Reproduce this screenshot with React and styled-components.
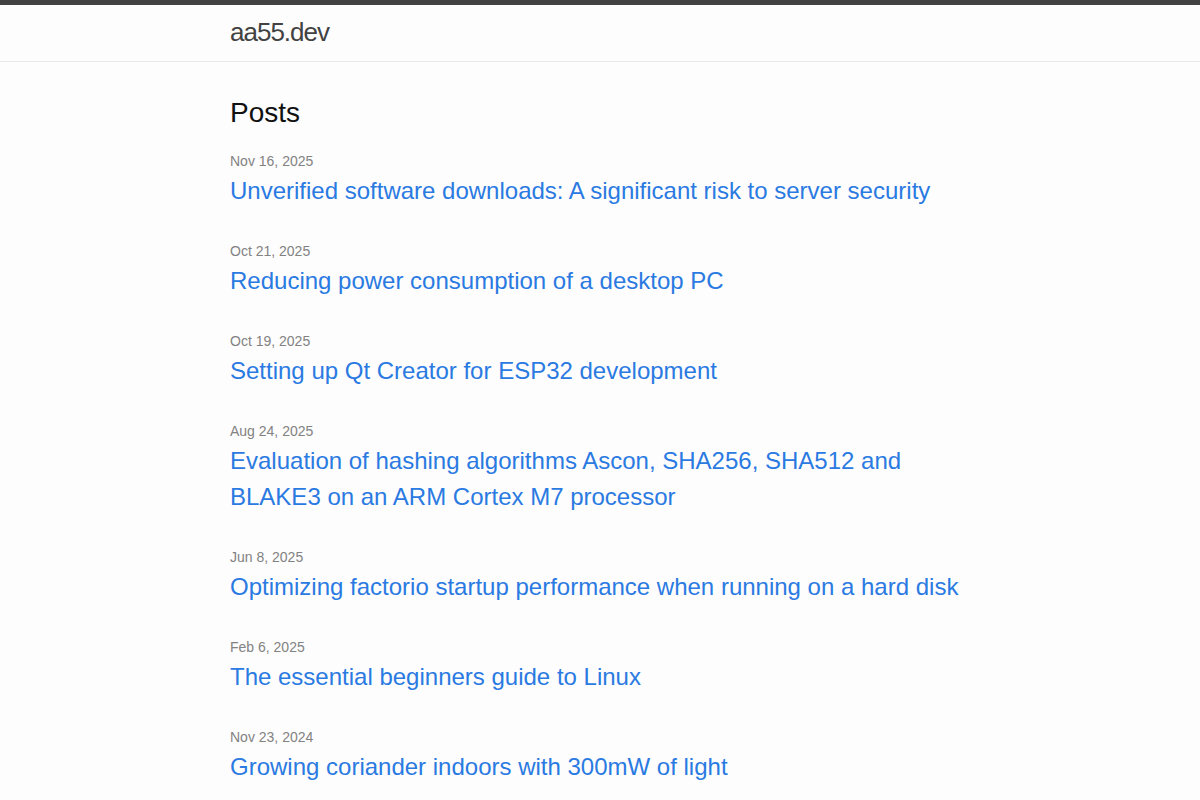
import React from "react";
import styled, { createGlobalStyle } from "styled-components";

const posts = [
  { date: "Nov 16, 2025", title: "Unverified software downloads: A significant risk to server security" },
  { date: "Oct 21, 2025", title: "Reducing power consumption of a desktop PC" },
  { date: "Oct 19, 2025", title: "Setting up Qt Creator for ESP32 development" },
  { date: "Aug 24, 2025", title: "Evaluation of hashing algorithms Ascon, SHA256, SHA512 and BLAKE3 on an ARM Cortex M7 processor" },
  { date: "Jun 8, 2025", title: "Optimizing factorio startup performance when running on a hard disk" },
  { date: "Feb 6, 2025", title: "The essential beginners guide to Linux" },
  { date: "Nov 23, 2024", title: "Growing coriander indoors with 300mW of light" },
];

const GlobalStyle = createGlobalStyle`
  body {
    margin: 0;
    background: #fdfdfd;
    color: #111111;
    font-family: "Liberation Sans", Arial, Helvetica, sans-serif;
    font-size: 16px;
    line-height: 1.5;
  }
`;

const Header = styled.header`
  border-top: 5px solid #424242;
  border-bottom: 1px solid #e8e8e8;
  min-height: 56px;
`;

const Wrapper = styled.div`
  max-width: 740px;
  margin: 0 auto;
  padding: 0 30px;
`;

const SiteTitle = styled.a`
  display: inline-block;
  font-size: 26px;
  line-height: 54px;
  letter-spacing: -1px;
  color: #424242;
  text-decoration: none;
`;

const Main = styled.main`
  padding: 30px 0;
`;

const Heading = styled.h2`
  font-size: 28px;
  font-weight: 400;
  line-height: 42px;
  margin: 0 0 15px;
`;

const List = styled.ul`
  list-style: none;
  margin: 0;
  padding: 0;
`;

const Item = styled.li`
  margin-bottom: 30px;
`;

const Meta = styled.span`
  font-size: 14px;
  color: #828282;
`;

const Title = styled.h3`
  margin: 0;
  font-size: 24px;
  font-weight: 400;
  line-height: 36px;
`;

const PostLink = styled.a`
  display: block;
  color: #2a7ae2;
  text-decoration: none;
`;

export default function App() {
  return (
    <>
      <GlobalStyle />
      <Header>
        <Wrapper>
          <SiteTitle href="#">aa55.dev</SiteTitle>
        </Wrapper>
      </Header>
      <Main>
        <Wrapper>
          <Heading>Posts</Heading>
          <List>
            {posts.map((p) => (
              <Item key={p.title}>
                <Meta>{p.date}</Meta>
                <Title>
                  <PostLink href="#">{p.title}</PostLink>
                </Title>
              </Item>
            ))}
          </List>
        </Wrapper>
      </Main>
    </>
  );
}
